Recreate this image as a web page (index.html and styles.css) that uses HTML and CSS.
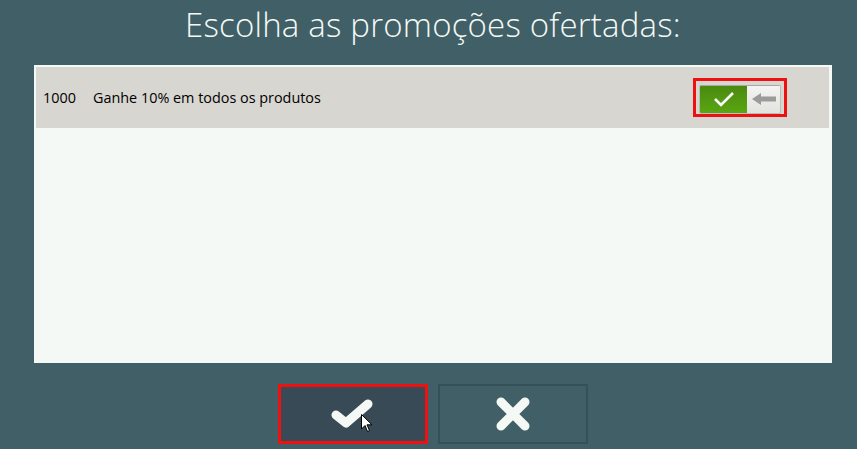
FILE: index.html
```html
<!DOCTYPE html>
<html>
<head>
<meta charset="utf-8">
<link rel="stylesheet" href="styles.css">
</head>
<body>
  <div class="screen">
    <h1 class="title">Escolha as promoções ofertadas:</h1>

    <div class="list"> <!-- promo list -->
      <div class="row">
        <span class="code">1000</span>
        <span class="desc">Ganhe 10% em todos os produtos</span>
        <div class="toggle-frame">
          <div class="toggle">
            <div class="on">
              <svg width="22" height="16" viewBox="0 0 22 16"><path d="M2 8 L8 14 L20 2" fill="none" stroke="#fff" stroke-width="2.6"/></svg>
            </div>
            <div class="off">
              <svg width="24" height="12" viewBox="0 0 24 12"><path d="M0 6 L9 0 L9 3.5 L24 3.5 L24 8.5 L9 8.5 L9 12 Z" fill="#9a9c99"/></svg>
            </div>
          </div>
        </div>
      </div>
    </div>

    <div class="actions">
      <button class="btn ok">
        <svg width="44" height="36" viewBox="0 0 44 36"><path d="M5 19 L15 27 L37 8" fill="none" stroke="#f5f9f5" stroke-width="9" stroke-linecap="round" stroke-linejoin="round"/></svg>
        <svg class="cursor" width="12" height="19" viewBox="0 0 12 19"><path d="M0.5 0.5 L0.5 15 L4 11.5 L6.5 17.5 L8.5 16.5 L6 10.8 L11 10.8 Z" fill="#fff" stroke="#000" stroke-width="1"/></svg>
      </button>
      <button class="btn cancel">
        <svg width="34" height="34" viewBox="0 0 34 34"><path d="M5 5 L29 29 M29 5 L5 29" fill="none" stroke="#f5f9f5" stroke-width="9" stroke-linecap="round"/></svg>
      </button>
    </div>
  </div>
</body>
</html>
```

FILE: styles.css
```css
html, body
{
  margin: 0;
  padding: 0;
  background: #405f67;
}

.screen
{
  width: 857px;
  height: 449px;
  display: flex;
  flex-direction: column;
  align-items: center;
  font-family: "Open Sans", "Noto Sans", sans-serif;
}

.title
{
  margin: 0 0 0 9px;
  height: 65px;
  font-weight: 300;
  font-size: 33px;
  line-height: 50px;
  color: #f5f9f5;
  letter-spacing: 0.2px;
}

.list /* white panel */
{
  box-sizing: border-box;
  width: 798px;
  height: 298px;
  margin-left: 9px;
  background: #f5f9f5;
  padding: 2px 3px 0 2px;
}

.list > .row
{
  display: flex;
  align-items: center;
  height: 61px;
  background: #d8d6d1;
  font-size: 14.4px;
  color: #000;
}

.row > .code { margin-left: 7px; width: 50px; }
.row > .desc { flex: 1; }

.toggle-frame /* red highlight */
{
  box-sizing: border-box;
  width: 94px;
  height: 39px;
  margin-right: 42px;
  margin-top: -1px;
  border: 3px solid #ee1111;
  padding: 4px 3px 2px 3px;
}

.toggle
{
  display: flex;
  height: 27px;
  border-radius: 2px;
  overflow: hidden;
  border: 1px solid #bcbcb8;
  border-top-color: #a8a8a4;
}

.toggle > .on
{
  width: 47px;
  display: flex;
  align-items: center;
  justify-content: center;
  background: linear-gradient(#4a8a10, #5aa612);
}

.toggle > .off
{
  flex: 1;
  display: flex;
  align-items: center;
  justify-content: center;
  background: linear-gradient(#f4f4f2, #e2e2df);
}

.actions
{
  display: flex;
  gap: 10px;
  margin-top: 21px;
  margin-left: 9px;
}

.btn
{
  box-sizing: border-box;
  width: 150px;
  height: 60px;
  display: flex;
  align-items: center;
  justify-content: center;
  padding: 0;
  cursor: pointer;
  position: relative;
}

.btn.ok
{
  background: #374a56;
  border: 3px solid #ee1111;
}

.btn.cancel
{
  background: #405f67;
  border: 2px solid #34505a;
}

.btn > .cursor /* mouse pointer over the button */
{
  position: absolute;
  left: 80px;
  top: 27px;
}
```
